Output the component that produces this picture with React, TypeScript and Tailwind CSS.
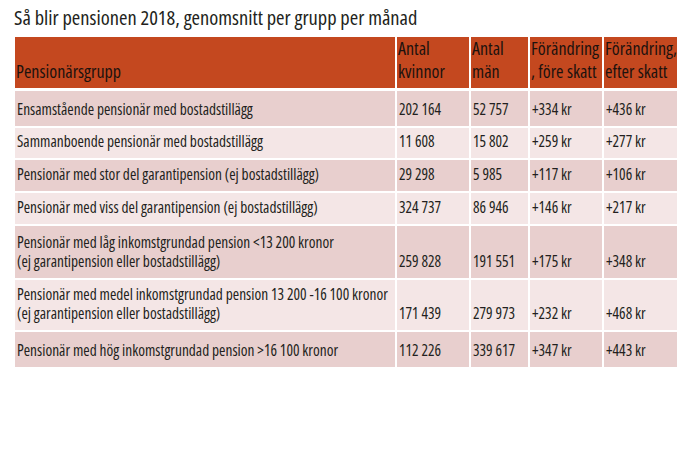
const rows: { name: string[]; k: string; m: string; f: string; e: string; h: string; bg: string }[] = [
  { name: ["Ensamstående pensionär med bostadstillägg"], k: "202 164", m: "52 757", f: "+334 kr", e: "+436 kr", h: "h-[35px]", bg: "bg-[#e8cfce]" },
  { name: ["Sammanboende pensionär med bostadstillägg"], k: "11 608", m: "15 802", f: "+259 kr", e: "+277 kr", h: "h-[30px]", bg: "bg-[#f4e6e6]" },
  { name: ["Pensionär med stor del garantipension (ej bostadstillägg)"], k: "29 298", m: "5 985", f: "+117 kr", e: "+106 kr", h: "h-[31px]", bg: "bg-[#e8cfce]" },
  { name: ["Pensionär med viss del garantipension (ej bostadstillägg)"], k: "324 737", m: "86 946", f: "+146 kr", e: "+217 kr", h: "h-[31px]", bg: "bg-[#f4e6e6]" },
  { name: ["Pensionär med låg inkomstgrundad pension <13 200 kronor", "(ej garantipension eller bostadstillägg)"], k: "259 828", m: "191 551", f: "+175 kr", e: "+348 kr", h: "h-[52px]", bg: "bg-[#e8cfce]" },
  { name: ["Pensionär med medel inkomstgrundad pension 13 200 -16 100 kronor", "(ej garantipension eller bostadstillägg)"], k: "171 439", m: "279 973", f: "+232 kr", e: "+468 kr", h: "h-[50px]", bg: "bg-[#f4e6e6]" },
  { name: ["Pensionär med hög inkomstgrundad pension >16 100 kronor"], k: "112 226", m: "339 617", f: "+347 kr", e: "+443 kr", h: "h-[35px]", bg: "bg-[#e8cfce]" },
];

function Cell({ children, cls }: { children: React.ReactNode; cls: string }) {
  return <div className={`flex flex-col justify-end pl-[2px] pb-[7px] whitespace-nowrap ${cls}`}>{children}</div>;
}

export default function App() {
  return (
    <div className="w-[693px] h-[462px] bg-white font-['Open_Sans',sans-serif] font-stretch-condensed text-[#231f20]">
      <div className="pt-[4px] pl-[14px] text-[20.5px] leading-[26px]">
        Så blir pensionen 2018, genomsnitt per grupp per månad
      </div>
      <div className="mt-[7px] ml-[15px] w-[662px]">
        <div className="grid grid-cols-[380px_72px_57px_72px_73px] gap-x-[2px] h-[50px] mb-[4px] text-[18px] leading-[23px] text-[#1c120e]">
          <div className="bg-[#c4481f] flex items-end pl-[1px] pb-[5px]">Pensionärsgrupp</div>
          <div className="bg-[#c4481f] flex flex-col justify-end pl-[1px] pb-[5px]">
            <span>Antal</span>
            <span>kvinnor</span>
          </div>
          <div className="bg-[#c4481f] flex flex-col justify-end pl-[1px] pb-[5px]">
            <span>Antal</span>
            <span>män</span>
          </div>
          <div className="bg-[#c4481f] flex flex-col justify-end pl-[1px] pb-[5px] whitespace-nowrap">
            <span>Förändring</span>
            <span>, före skatt</span>
          </div>
          <div className="bg-[#c4481f] flex flex-col justify-end pl-[1px] pb-[5px] whitespace-nowrap">
            <span>Förändring,</span>
            <span>efter skatt</span>
          </div>
        </div>
        <div className="flex flex-col gap-y-[2px] text-[15.4px] leading-[19px]">
          {rows.map((r, i) => (
            <div key={i} className={`grid grid-cols-[380px_72px_57px_72px_73px] gap-x-[2px] ${r.h}`}>
              <Cell cls={r.bg}>
                {r.name.map((n, j) => (
                  <span key={j}>{n}</span>
                ))}
              </Cell>
              <Cell cls={r.bg}>{r.k}</Cell>
              <Cell cls={r.bg}>{r.m}</Cell>
              <Cell cls={r.bg}>{r.f}</Cell>
              <Cell cls={r.bg}>{r.e}</Cell>
            </div>
          ))}
        </div>
      </div>
    </div>
  );
}
